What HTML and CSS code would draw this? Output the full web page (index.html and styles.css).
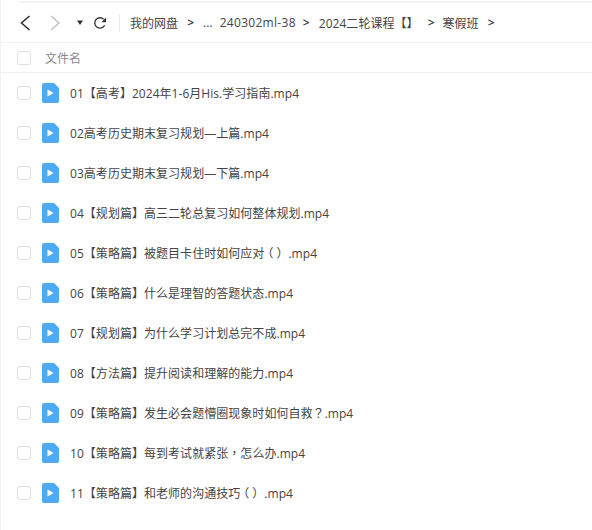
FILE: index.html
```html
<!DOCTYPE html>
<html lang="zh">
<head>
<meta charset="utf-8">
<title>文件</title>
<link rel="stylesheet" href="styles.css">
</head>
<body>
<div class="page">
  <div class="topline"></div>
  <nav class="toolbar">
    <svg class="ic back" width="14" height="18" viewBox="0 0 14 18"><path d="M11.5 2 L3.5 9 L11.5 16" fill="none" stroke="#333" stroke-width="1.6"/></svg>
    <svg class="ic fwd" width="14" height="18" viewBox="0 0 14 18"><path d="M3 2 L11 9 L3 16" fill="none" stroke="#c4c4c4" stroke-width="1.6"/></svg>
    <svg class="ic drop" width="8" height="6" viewBox="0 0 8 6"><path d="M1 0.5 H7 L4 5 Z" fill="#333"/></svg>
    <svg class="ic refresh" width="14" height="14" viewBox="0 0 14 14"><path d="M11.6 9.2 A5.2 5.2 0 1 1 10.6 3.2" fill="none" stroke="#333" stroke-width="1.4"/><path d="M13 1.5 V6.3 H8.4 Z" fill="#333"/></svg>
    <span class="divider"></span>
    <div class="crumbs">
      <span class="crumb">我的网盘</span><span class="sep">&gt;</span>
      <span class="crumb dots">...</span>
      <span class="crumb num">240302ml-38</span><span class="sep s1">&gt;</span>
      <span class="crumb">2024二轮课程【】</span><span class="sep s2">&gt;</span>
      <span class="crumb">寒假班</span><span class="sep">&gt;</span>
    </div>
  </nav>
  <header class="head">
    <span class="check"></span>
    <span class="head-label">文件名</span>
  </header>
  <ul class="list">
    <li class="row"><span class="check"></span><svg class="file" width="17" height="20" viewBox="0 0 17 20"><path d="M2 0 H12 L17 5 V18 A2 2 0 0 1 15 20 H2 A2 2 0 0 1 0 18 V2 A2 2 0 0 1 2 0 Z" fill="#4daaf5"/><path d="M5.5 6.5 L11.5 10 L5.5 13.5 Z" fill="#fff"/></svg><span class="name">01【高考】2024年1-6月His.学习指南.mp4</span></li>
    <li class="row"><span class="check"></span><svg class="file" width="17" height="20" viewBox="0 0 17 20"><path d="M2 0 H12 L17 5 V18 A2 2 0 0 1 15 20 H2 A2 2 0 0 1 0 18 V2 A2 2 0 0 1 2 0 Z" fill="#4daaf5"/><path d="M5.5 6.5 L11.5 10 L5.5 13.5 Z" fill="#fff"/></svg><span class="name">02高考历史期末复习规划—上篇.mp4</span></li>
    <li class="row"><span class="check"></span><svg class="file" width="17" height="20" viewBox="0 0 17 20"><path d="M2 0 H12 L17 5 V18 A2 2 0 0 1 15 20 H2 A2 2 0 0 1 0 18 V2 A2 2 0 0 1 2 0 Z" fill="#4daaf5"/><path d="M5.5 6.5 L11.5 10 L5.5 13.5 Z" fill="#fff"/></svg><span class="name">03高考历史期末复习规划—下篇.mp4</span></li>
    <li class="row"><span class="check"></span><svg class="file" width="17" height="20" viewBox="0 0 17 20"><path d="M2 0 H12 L17 5 V18 A2 2 0 0 1 15 20 H2 A2 2 0 0 1 0 18 V2 A2 2 0 0 1 2 0 Z" fill="#4daaf5"/><path d="M5.5 6.5 L11.5 10 L5.5 13.5 Z" fill="#fff"/></svg><span class="name">04【规划篇】高三二轮总复习如何整体规划.mp4</span></li>
    <li class="row"><span class="check"></span><svg class="file" width="17" height="20" viewBox="0 0 17 20"><path d="M2 0 H12 L17 5 V18 A2 2 0 0 1 15 20 H2 A2 2 0 0 1 0 18 V2 A2 2 0 0 1 2 0 Z" fill="#4daaf5"/><path d="M5.5 6.5 L11.5 10 L5.5 13.5 Z" fill="#fff"/></svg><span class="name">05【策略篇】被题目卡住时如何应对<span class="punct paren" lang="zh-Hant">（）</span>.mp4</span></li>
    <li class="row"><span class="check"></span><svg class="file" width="17" height="20" viewBox="0 0 17 20"><path d="M2 0 H12 L17 5 V18 A2 2 0 0 1 15 20 H2 A2 2 0 0 1 0 18 V2 A2 2 0 0 1 2 0 Z" fill="#4daaf5"/><path d="M5.5 6.5 L11.5 10 L5.5 13.5 Z" fill="#fff"/></svg><span class="name">06【策略篇】什么是理智的答题状态.mp4</span></li>
    <li class="row"><span class="check"></span><svg class="file" width="17" height="20" viewBox="0 0 17 20"><path d="M2 0 H12 L17 5 V18 A2 2 0 0 1 15 20 H2 A2 2 0 0 1 0 18 V2 A2 2 0 0 1 2 0 Z" fill="#4daaf5"/><path d="M5.5 6.5 L11.5 10 L5.5 13.5 Z" fill="#fff"/></svg><span class="name">07【规划篇】为什么学习计划总完不成.mp4</span></li>
    <li class="row"><span class="check"></span><svg class="file" width="17" height="20" viewBox="0 0 17 20"><path d="M2 0 H12 L17 5 V18 A2 2 0 0 1 15 20 H2 A2 2 0 0 1 0 18 V2 A2 2 0 0 1 2 0 Z" fill="#4daaf5"/><path d="M5.5 6.5 L11.5 10 L5.5 13.5 Z" fill="#fff"/></svg><span class="name">08【方法篇】提升阅读和理解的能力.mp4</span></li>
    <li class="row"><span class="check"></span><svg class="file" width="17" height="20" viewBox="0 0 17 20"><path d="M2 0 H12 L17 5 V18 A2 2 0 0 1 15 20 H2 A2 2 0 0 1 0 18 V2 A2 2 0 0 1 2 0 Z" fill="#4daaf5"/><path d="M5.5 6.5 L11.5 10 L5.5 13.5 Z" fill="#fff"/></svg><span class="name">09【策略篇】发生必会题懵圈现象时如何自救<span class="punct" lang="zh-Hant">？</span>.mp4</span></li>
    <li class="row"><span class="check"></span><svg class="file" width="17" height="20" viewBox="0 0 17 20"><path d="M2 0 H12 L17 5 V18 A2 2 0 0 1 15 20 H2 A2 2 0 0 1 0 18 V2 A2 2 0 0 1 2 0 Z" fill="#4daaf5"/><path d="M5.5 6.5 L11.5 10 L5.5 13.5 Z" fill="#fff"/></svg><span class="name">10【策略篇】每到考试就紧张<span class="punct" lang="zh-Hant">，</span>怎么办.mp4</span></li>
    <li class="row"><span class="check"></span><svg class="file" width="17" height="20" viewBox="0 0 17 20"><path d="M2 0 H12 L17 5 V18 A2 2 0 0 1 15 20 H2 A2 2 0 0 1 0 18 V2 A2 2 0 0 1 2 0 Z" fill="#4daaf5"/><path d="M5.5 6.5 L11.5 10 L5.5 13.5 Z" fill="#fff"/></svg><span class="name">11【策略篇】和老师的沟通技巧<span class="punct paren" lang="zh-Hant">（）</span>.mp4</span></li>
  </ul>
</div>
</body>
</html>
```
FILE: styles.css
```css
html, body {
  margin: 0;
  padding: 0;
  background: #fff;
}
.page {
  width: 592px;
  height: 530px;
  overflow: hidden;
  box-sizing: border-box;
  border-left: 1px solid #f2f2f2;
  padding-left: 3px;
  font-family: "Open Sans", "Noto Sans CJK SC", sans-serif;
  font-size: 12px;
  letter-spacing: 0.04px;
  color: #444;
}
.topline {
  height: 2px;
  margin-left: 15px;
  margin-top: 1px;
  background: #f4f4f4;
}
.toolbar {
  display: flex;
  align-items: center;
  height: 39px;
  border-bottom: 1px solid #f1f1f1;
  margin-left: -4px;
}
.ic { flex: none; }
.back { margin-left: 18px; }
.fwd { margin-left: 16px; }
.drop { margin-left: 14px; }
.refresh { margin-left: 9px; }
.divider {
  width: 1px;
  height: 18px;
  background: #e8e8e8;
  margin: 0 10px 0 12px;
}
.crumbs {
  display: flex;
  align-items: center;
  color: #444;
}
.crumb { white-space: nowrap; }
.num { letter-spacing: 0.3px; }
.sep {
  font-weight: 600;
  margin: 0 9px;
  color: #333;
}
.sep.s1 { margin: 0 9px 0 7px; }
.sep.s2 { margin: 0 8px 0 9px; }
.dots { margin-right: 7px; }
.head {
  display: flex;
  align-items: center;
  height: 29px;
  border-bottom: 1px solid #f1f1f1;
  margin-left: -4px;
  padding-left: 17px;
}
.head-label {
  margin-left: 14px;
  color: #8a8a8a;
}
.check {
  flex: none;
  width: 12px;
  height: 12px;
  border: 1px solid #dedede;
  border-radius: 3px;
  background: #fff;
}
.list {
  list-style: none;
  margin: 0 0 0 -4px;
  padding: 0;
}
.row {
  display: flex;
  align-items: center;
  height: 40px;
  padding-left: 17px;
}
.file {
  flex: none;
  margin-left: 11px;
}
.name {
  margin-left: 11px;
  white-space: nowrap;
}
.punct {
  font-family: "Noto Sans CJK TC", sans-serif;
}
.paren {
  letter-spacing: 3px;
  margin: 0 -3px;
}
```
